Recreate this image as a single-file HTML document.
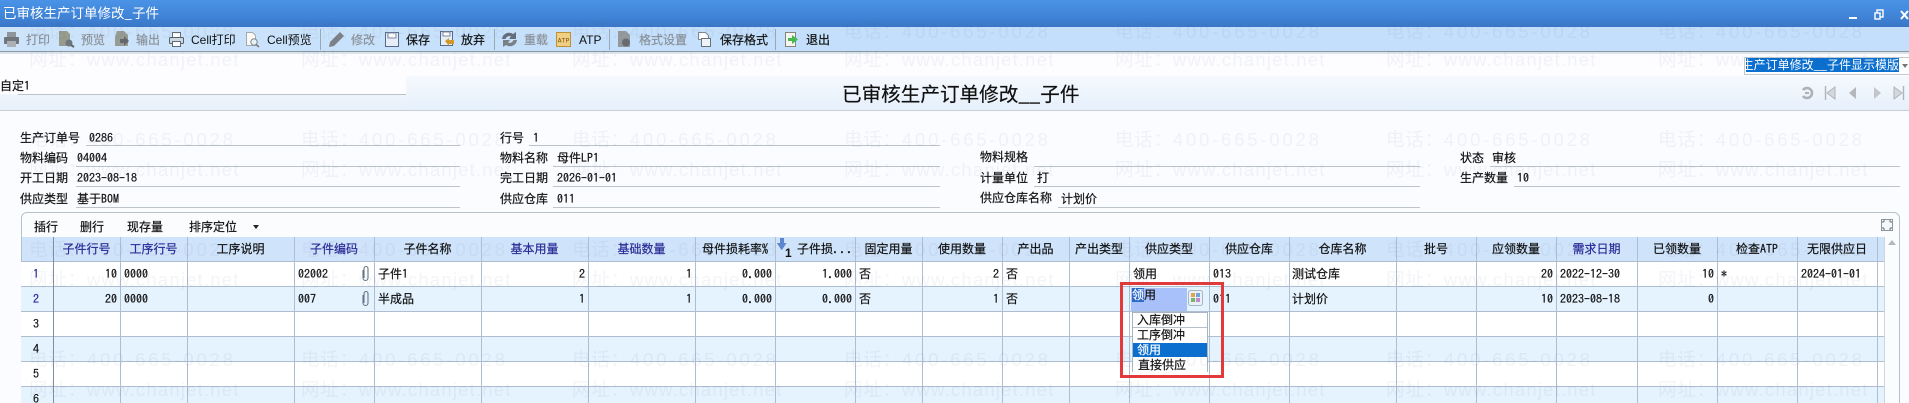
<!DOCTYPE html>
<html lang="zh"><head><meta charset="utf-8"><title>已审核生产订单修改__子件</title>
<style>
html,body{margin:0;padding:0;width:1909px;height:403px;overflow:hidden;background:#fbfcff}
body{position:relative;font:12px "WenQuanYi Zen Hei","Noto Sans CJK SC",sans-serif;color:#111}
div,span,svg{position:absolute}
.t,.o{-webkit-text-stroke:.2px currentColor}
.t{white-space:nowrap;line-height:14px;height:14px}
.n{font-family:"IPAGothic","Liberation Mono",monospace}
.l{font-family:"Liberation Sans","Noto Sans CJK SC",sans-serif}
.g{color:#8b9199}
.ln{height:1px;background:#bcc3c9}
.h{top:242px;text-align:center}
.b{color:#2a2a96}
.v{top:237px;width:1px;height:166px;background:#aebdd0}
.rr{left:21px;width:1863px;height:24px;border-bottom:1px solid #aebdd0}
.o{left:1133px;width:74px;height:14px;padding-left:4px;line-height:14px;white-space:nowrap}
.w{color:rgba(80,90,130,.065);font:18.5px/22px "Liberation Sans","Noto Sans CJK SC",sans-serif;white-space:nowrap;height:22px;z-index:50;letter-spacing:2.8px}
.w.u{letter-spacing:1.2px}
.w em{font-style:normal;letter-spacing:.8px}
</style></head><body>

<div style="left:0;top:0;width:1909px;height:27px;background:linear-gradient(#4a93e6,#4084d8 60%,#3a76c6)"></div>
<span class="t" style="left:3px;top:5px;color:#fff;font-size:13.5px;-webkit-text-stroke:0">已审核生产订单修改_子件</span>
<div style="left:1849px;top:17px;width:8px;height:2px;background:#fff"></div>
<svg style="left:1874px;top:9px" width="10" height="11"><rect x="3" y="1" width="6" height="7" fill="none" stroke="#fff" stroke-width="1.4"/><rect x="1" y="4" width="5" height="6" fill="#4084d8" stroke="#fff" stroke-width="1.4"/></svg>
<svg style="left:1900px;top:10px" width="9" height="10"><path d="M1 1L8 9M8 1L1 9" stroke="#fff" stroke-width="2"/></svg>

<div style="left:0;top:27px;width:1909px;height:24px;background:linear-gradient(90deg,#cde4fb,#c3dffc 40%)"></div>
<div style="left:0;top:51px;width:1909px;height:1px;background:#8f969c"></div>
<div style="left:0;top:52px;width:1909px;height:2px;background:#d9e4ef"></div>
<div style="left:0;top:54px;width:1909px;height:22px;background:#fdfdff"></div>
<div style="left:406px;top:76px;width:1503px;height:34px;background:linear-gradient(#f5f9fe,#e6f0fb)"></div>
<div style="left:0;top:94px;width:406px;height:16px;background:linear-gradient(#f0f5fc,#e7f0fb)"></div>
<div style="left:0;top:76px;width:406px;height:18px;background:#fdfdff"></div>
<div style="left:0;top:110px;width:1909px;height:1px;background:#c8d0d6"></div>
<div class="ln" style="left:18px;top:94px;width:388px"></div>
<span class="t" style="left:0;top:79px">自定<span class="n" style="position:static">1</span></span>
<span class="t" style="left:842px;top:82px;height:22px;line-height:22px;font-size:19.6px;color:#111">已审核生产订单修改__子件</span>

<!-- toolbar icons -->
<svg style="left:3px;top:31px" width="17" height="17"><path d="M4 1h9v6H4z" fill="#8f959b"/><rect x="1" y="6" width="15" height="7" rx="1" fill="#6f757b"/><rect x="4" y="10" width="9" height="6" fill="#aab0b5"/></svg>
<span class="t g" style="left:26px;top:33px">打印</span>
<svg style="left:58px;top:31px" width="17" height="17"><path d="M1 0h8l3 3v12H1z" fill="#979b8e"/><circle cx="11" cy="12" r="3.500" fill="#6f767c"/><path d="M13 14l3 2" stroke="#666" stroke-width="2"/></svg>
<span class="t g" style="left:81px;top:33px">预览</span>
<svg style="left:113px;top:31px" width="17" height="17"><path d="M4 0h7l4 4v11H2V6z" fill="#969c92"/><path d="M7 8h4V5l5 5-5 5v-3H7z" fill="#62686d"/></svg>
<span class="t g" style="left:136px;top:33px">输出</span>
<svg style="left:168px;top:31px" width="17" height="17"><path d="M4.500 1.500h8v5h-8z" fill="#fff" stroke="#5f6d79"/><rect x="1.500" y="6.500" width="14" height="6" rx="1" fill="#cdd7e0" stroke="#55626e"/><rect x="4.500" y="10.500" width="8" height="5" fill="#fff" stroke="#5f6d79"/></svg>
<span class="t l" style="left:191px;top:33px;-webkit-text-stroke:0">Cell打印</span>
<svg style="left:244px;top:31px" width="17" height="17"><path d="M2.500 1.500h6l3 3v10h-9z" fill="#fbfbf6" stroke="#a4aab0"/><circle cx="10" cy="11" r="3.200" fill="#e8f0f4" stroke="#7e878e"/><path d="M12 13.500l3 2.500" stroke="#7b7b7b" stroke-width="1.500"/></svg>
<span class="t l" style="left:267px;top:33px;-webkit-text-stroke:0">Cell预览</span>
<div style="left:320px;top:29px;width:1px;height:21px;background:#9aa8b6"></div>
<svg style="left:328px;top:31px" width="17" height="17"><path d="M12 1l4 4-10 10-5 1 1-5z" fill="#7c8187"/></svg>
<span class="t g" style="left:351px;top:33px">修改</span>
<svg style="left:385px;top:32px" width="14" height="15"><rect x=".5" y=".5" width="13" height="14" fill="#e8eef8" stroke="#586a8a"/><rect x="3" y="1" width="8" height="5" fill="#fff" stroke="#7a89a3"/></svg>
<span class="t" style="left:406px;top:33px">保存</span>
<svg style="left:440px;top:31px" width="15" height="16"><rect x=".5" y=".5" width="12" height="14" fill="#e8eef8" stroke="#586a8a"/><rect x="3" y="1" width="7" height="4" fill="#fff" stroke="#7a89a3"/><path d="M5 10l4-3v2h5v4H9v2z" fill="#d09a28"/></svg>
<span class="t" style="left:461px;top:33px">放弃</span>
<div style="left:494px;top:29px;width:1px;height:21px;background:#9aa8b6"></div>
<svg style="left:501px;top:31px" width="17" height="17"><path d="M1 8a7 7 0 0 1 11-5l3-2v7H8l2-2.500a4 4 0 0 0-5.500 2.500z" fill="#656d78"/><path d="M16 9a7 7 0 0 1-11 5l-3 2V9h7l-2 2.500a4 4 0 0 0 5.500-2.500z" fill="#7a8086"/></svg>
<span class="t g" style="left:524px;top:33px">重载</span>
<svg style="left:556px;top:32px" width="15" height="15"><rect x=".5" y=".5" width="14" height="14" fill="#f0cf84" stroke="#bb9036"/><text x="7.500" y="10.500" font-size="6.500" text-anchor="middle" font-family="Liberation Mono,monospace" fill="#7d5208">ATP</text></svg>
<span class="t l" style="left:579px;top:33px;-webkit-text-stroke:0">ATP</span>
<div style="left:609px;top:29px;width:1px;height:21px;background:#9aa8b6"></div>
<svg style="left:616px;top:31px" width="17" height="17"><path d="M2 0h8l4 4v12H2z" fill="#94989a"/><circle cx="10" cy="11.500" r="4" fill="#666c71"/></svg>
<span class="t g" style="left:639px;top:33px">格式设置</span>
<svg style="left:696px;top:31px" width="16" height="17"><path d="M2.500 1.500h7l3 3v4h-10z" fill="#fff" stroke="#7f868e"/><rect x="5.500" y="7.500" width="9" height="8" fill="#eef3f8" stroke="#65737f"/></svg>
<span class="t" style="left:720px;top:33px">保存格式</span>
<div style="left:775px;top:29px;width:1px;height:21px;background:#9aa8b6"></div>
<svg style="left:783px;top:31px" width="16" height="17"><path d="M2.500 1.500h10v14h-10z" fill="#f6f5ef" stroke="#84847a"/><path d="M5 7h4V4l6 4.500-6 4.500V10H5z" fill="#48b84c"/></svg>
<span class="t" style="left:806px;top:33px">退出</span>

<!-- template dropdown -->
<div style="left:1744px;top:57px;width:165px;height:18px;background:#fff;border:1px solid #c0c8d0;border-right:0;box-sizing:border-box"></div>
<div style="left:1746px;top:58px;width:153px;height:14px;overflow:hidden;background:#0a6fcf;color:#fff;line-height:14px;white-space:nowrap"><span style="right:0;top:0">生产订单修改__子件显示模版</span></div>
<svg style="left:1901px;top:63px" width="8" height="6"><path d="M1 1h6L4 5z" fill="#777"/></svg>

<!-- nav icons -->
<svg style="left:1801px;top:86px" width="13" height="14"><path d="M2 4A5 5 0 1 1 2 10" fill="none" stroke="#aeb2b6" stroke-width="2.600"/><path d="M4 7h4" stroke="#aeb2b6" stroke-width="2.200"/></svg>
<svg style="left:1824px;top:86px" width="12" height="14"><path d="M1.500 0v14" stroke="#b0b4b8" stroke-width="1.400"/><path d="M11 1v12L3 7z" fill="#d3d8dd" stroke="#b0b4b8"/></svg>
<svg style="left:1848px;top:86px" width="9" height="14"><path d="M8 1v12L1 7z" fill="#b4b8bc"/></svg>
<svg style="left:1873px;top:86px" width="9" height="14"><path d="M1 1v12l7-6z" fill="#c2c6ca"/></svg>
<svg style="left:1893px;top:86px" width="12" height="14"><path d="M10.500 0v14" stroke="#b0b4b8" stroke-width="1.400"/><path d="M1 1v12l8-6z" fill="#d3d8dd" stroke="#b0b4b8"/></svg>

<!-- form -->
<span class="t" style="left:20px;top:131px">生产订单号</span><span class="t n" style="left:89px;top:131px">0286</span>
<div class="ln" style="left:86px;top:145px;width:374px"></div>
<span class="t" style="left:500px;top:131px">行号</span><span class="t n" style="left:533px;top:131px">1</span>
<div class="ln" style="left:529px;top:145px;width:411px"></div>

<span class="t" style="left:20px;top:151px">物料编码</span><span class="t n" style="left:77px;top:151px">04004</span>
<div class="ln" style="left:76px;top:166px;width:384px"></div>
<span class="t" style="left:500px;top:151px">物料名称</span><span class="t" style="left:557px;top:151px">母件<span class="n" style="position:static">LP1</span></span>
<div class="ln" style="left:553px;top:166px;width:387px"></div>
<span class="t" style="left:980px;top:150px">物料规格</span>
<div class="ln" style="left:1034px;top:166px;width:386px"></div>
<span class="t" style="left:1460px;top:151px">状态</span><span class="t" style="left:1492px;top:151px">审核</span>
<div class="ln" style="left:1490px;top:166px;width:410px"></div>

<span class="t" style="left:20px;top:171px">开工日期</span><span class="t n" style="left:77px;top:171px">2023-08-18</span>
<div class="ln" style="left:76px;top:186px;width:384px"></div>
<span class="t" style="left:500px;top:171px">完工日期</span><span class="t n" style="left:557px;top:171px">2026-01-01</span>
<div class="ln" style="left:553px;top:186px;width:387px"></div>
<span class="t" style="left:980px;top:171px">计量单位</span><span class="t" style="left:1037px;top:171px">打</span>
<div class="ln" style="left:1034px;top:186px;width:386px"></div>
<span class="t" style="left:1460px;top:171px">生产数量</span><span class="t n" style="left:1517px;top:171px">10</span>
<div class="ln" style="left:1514px;top:186px;width:386px"></div>

<span class="t" style="left:20px;top:192px">供应类型</span><span class="t" style="left:77px;top:192px">基于<span class="n" style="position:static">BOM</span></span>
<div class="ln" style="left:76px;top:207px;width:384px"></div>
<span class="t" style="left:500px;top:192px">供应仓库</span><span class="t n" style="left:557px;top:192px">011</span>
<div class="ln" style="left:553px;top:207px;width:387px"></div>
<span class="t" style="left:980px;top:191px">供应仓库名称</span><span class="t" style="left:1061px;top:192px">计划价</span>
<div class="ln" style="left:1058px;top:207px;width:362px"></div>

<!-- grid panel -->
<div style="left:21px;top:212px;width:1879px;height:200px;box-sizing:border-box;border:1px solid #b5c2c8;border-radius:6px 6px 0 0;background:#fbfcfe"></div>
<span class="t" style="left:34px;top:220px">插行</span>
<span class="t" style="left:80px;top:220px">删行</span>
<span class="t" style="left:127px;top:220px">现存量</span>
<span class="t" style="left:189px;top:220px">排序定位</span>
<svg style="left:253px;top:225px" width="7" height="5"><path d="M0 0h6L3 4z" fill="#222"/></svg>
<svg style="left:1881px;top:219px" width="12" height="12"><rect x=".5" y=".5" width="11" height="11" fill="#f4f7f9" stroke="#8b969e"/><path d="M2 2h2M2 2v2M10 2H8M10 2v2M2 10h2M2 10V8M10 10H8M10 10V8" stroke="#66727c"/></svg>

<div style="left:22px;top:237px;width:1862px;height:24px;background:#cfe4fb;border-bottom:1px solid #aebdd0;box-sizing:content-box"></div>
<div class="rr" style="top:262px;background:#fff"></div>
<div class="rr" style="top:287px;background:#e5f3fe"></div>
<div class="rr" style="top:312px;background:#fff"></div>
<div class="rr" style="top:337px;background:#e5f3fe"></div>
<div class="rr" style="top:362px;background:#fff"></div>
<div class="rr" style="top:387px;background:#e5f3fe"></div>
<div style="left:1884px;top:237px;width:1px;height:166px;background:#cbd5de"></div>
<svg style="left:1888px;top:240px" width="8" height="5"><path d="M4 0l4 5H0z" fill="#b2b8bd"/></svg>

<div class="v" style="left:53px;background:#7f8fa3"></div><div class="v" style="left:120px"></div><div class="v" style="left:187px"></div><div class="v" style="left:294px"></div><div class="v" style="left:374px"></div><div class="v" style="left:481px"></div><div class="v" style="left:588px"></div><div class="v" style="left:695px"></div><div class="v" style="left:775px"></div><div class="v" style="left:855px"></div><div class="v" style="left:922px"></div><div class="v" style="left:1002px"></div><div class="v" style="left:1069px"></div><div class="v" style="left:1129px"></div><div class="v" style="left:1209px"></div><div class="v" style="left:1289px"></div><div class="v" style="left:1396px"></div><div class="v" style="left:1476px"></div><div class="v" style="left:1556px"></div><div class="v" style="left:1637px"></div><div class="v" style="left:1717px"></div><div class="v" style="left:1797px"></div><div class="v" style="left:1877px"></div>

<span class="t h b" style="left:53px;width:67px">子件行号</span>
<span class="t h b" style="left:120px;width:67px">工序行号</span>
<span class="t h" style="left:187px;width:107px">工序说明</span>
<span class="t h b" style="left:294px;width:80px">子件编码</span>
<span class="t h" style="left:374px;width:107px">子件名称</span>
<span class="t h b" style="left:481px;width:107px">基本用量</span>
<span class="t h b" style="left:588px;width:107px">基础数量</span>
<span class="t h" style="left:695px;width:80px">母件损耗率<span class="n" style="position:static">%</span></span>
<svg style="left:776px;top:238px" width="17" height="20"><path d="M6 0v5h4L5.500 12 1 5h3V0z" fill="#4470bd"/><path d="M4 0h4v5h2.500L6 12 1.500 5H4z" fill="#5c86d0"/><text x="9" y="19" font-size="12" font-weight="700" font-family="Liberation Sans,sans-serif" fill="#111">1</text></svg>
<span class="t" style="left:797px;top:242px">子件损<span class="n" style="position:static;letter-spacing:1px">...</span></span>
<span class="t h" style="left:855px;width:67px">固定用量</span>
<span class="t h" style="left:922px;width:80px">使用数量</span>
<span class="t h" style="left:1002px;width:67px">产出品</span>
<span class="t h" style="left:1069px;width:60px">产出类型</span>
<span class="t h" style="left:1129px;width:80px">供应类型</span>
<span class="t h" style="left:1209px;width:80px">供应仓库</span>
<span class="t h" style="left:1289px;width:107px">仓库名称</span>
<span class="t h" style="left:1396px;width:80px">批号</span>
<span class="t h" style="left:1476px;width:80px">应领数量</span>
<span class="t h b" style="left:1556px;width:81px">需求日期</span>
<span class="t h" style="left:1637px;width:80px">已领数量</span>
<span class="t h" style="left:1717px;width:80px">检查<span class="n" style="position:static">ATP</span></span>
<span class="t h" style="left:1797px;width:80px">无限供应日</span>

<span class="t n b" style="left:33px;top:267px">1</span>
<span class="t n b" style="left:33px;top:292px">2</span>
<span class="t n" style="left:33px;top:317px">3</span>
<span class="t n" style="left:33px;top:342px">4</span>
<span class="t n" style="left:33px;top:367px">5</span>
<span class="t n" style="left:33px;top:392px">6</span>

<span class="t n" style="right:1792px;top:267px">10</span>
<span class="t n" style="left:124px;top:267px">0000</span>
<span class="t n" style="left:298px;top:267px">02002</span>
<svg style="left:361px;top:265px" width="9" height="18"><path d="M2 5v8a2.500 2.500 0 0 0 5 0V3.500a2 2 0 0 0-4 0V13" fill="none" stroke="#667585" stroke-width="1.100"/></svg>
<span class="t" style="left:378px;top:267px">子件<span class="n" style="position:static">1</span></span>
<span class="t n" style="right:1324px;top:267px">2</span>
<span class="t n" style="right:1217px;top:267px">1</span>
<span class="t n" style="right:1137px;top:267px">0.000</span>
<span class="t n" style="right:1057px;top:267px">1.000</span>
<span class="t" style="left:859px;top:267px">否</span>
<span class="t n" style="right:910px;top:267px">2</span>
<span class="t" style="left:1006px;top:267px">否</span>
<span class="t" style="left:1133px;top:267px">领用</span>
<span class="t n" style="left:1213px;top:267px">013</span>
<span class="t" style="left:1292px;top:267px">测试仓库</span>
<span class="t n" style="right:356px;top:267px">20</span>
<span class="t n" style="left:1560px;top:267px">2022-12-30</span>
<span class="t n" style="right:195px;top:267px">10</span>
<span class="t n" style="left:1721px;top:267px">*</span>
<span class="t n" style="left:1801px;top:267px">2024-01-01</span>

<span class="t n" style="right:1792px;top:292px">20</span>
<span class="t n" style="left:124px;top:292px">0000</span>
<span class="t n" style="left:298px;top:292px">007</span>
<svg style="left:361px;top:290px" width="9" height="18"><path d="M2 5v8a2.500 2.500 0 0 0 5 0V3.500a2 2 0 0 0-4 0V13" fill="none" stroke="#667585" stroke-width="1.100"/></svg>
<span class="t" style="left:378px;top:292px">半成品</span>
<span class="t n" style="right:1324px;top:292px">1</span>
<span class="t n" style="right:1217px;top:292px">1</span>
<span class="t n" style="right:1137px;top:292px">0.000</span>
<span class="t n" style="right:1057px;top:292px">0.000</span>
<span class="t" style="left:859px;top:292px">否</span>
<span class="t n" style="right:910px;top:292px">1</span>
<span class="t" style="left:1006px;top:292px">否</span>
<span class="t n" style="left:1213px;top:292px">011</span>
<span class="t" style="left:1292px;top:292px">计划价</span>
<span class="t n" style="right:356px;top:292px">10</span>
<span class="t n" style="left:1560px;top:292px">2023-08-18</span>
<span class="t n" style="right:195px;top:292px">0</span>

<!-- editor -->
<div style="left:1131px;top:288px;width:56px;height:23px;background:#a9c1fb"></div>
<div style="left:1132px;top:288px;width:12px;height:14px;background:#2a6ac8"></div>
<span class="t" style="left:1132px;top:288px;color:#111"><span style="position:static;color:#fff">领</span>用</span>
<svg style="left:1188px;top:290px" width="15" height="16"><rect x=".5" y=".5" width="14" height="15" rx="2" fill="#e8f0f8" stroke="#a7b6c6"/><rect x="3" y="3" width="4" height="4" fill="#e7a14a"/><rect x="8" y="3" width="4" height="4" fill="#6da4d9"/><rect x="3" y="8" width="4" height="4" fill="#77b56c"/><rect x="8" y="8" width="4" height="4" fill="#c389c9"/></svg>

<div style="left:1132px;top:312px;width:76px;height:60px;box-sizing:border-box;border:1px solid #a9b5c5;border-bottom:0;background:#fff"></div>
<div style="left:1133px;top:327px;width:74px;height:1px;background:#b6c1ce"></div>
<div style="left:1133px;top:343px;width:74px;height:14px;background:#0a6fcf"></div>
<span class="o" style="top:313px">入库倒冲</span>
<span class="o" style="top:328px">工序倒冲</span>
<span class="o" style="top:343px;color:#fff">领用</span>
<span class="o" style="top:358px;padding-left:5px">直接供应</span>

<div style="left:1120px;top:282px;width:104px;height:96px;box-sizing:border-box;border:3px solid #e23a3a"></div>

<!-- watermark -->
<div class="w" style="left:29px;top:21px"><em>电话：</em>400-665-0028</div><div class="w" style="left:301px;top:21px"><em>电话：</em>400-665-0028</div><div class="w" style="left:572px;top:21px"><em>电话：</em>400-665-0028</div><div class="w" style="left:844px;top:21px"><em>电话：</em>400-665-0028</div><div class="w" style="left:1115px;top:21px"><em>电话：</em>400-665-0028</div><div class="w" style="left:1386px;top:21px"><em>电话：</em>400-665-0028</div><div class="w" style="left:1658px;top:21px"><em>电话：</em>400-665-0028</div>
<div class="w u" style="left:29px;top:49px"><em>网址：</em>www.chanjet.net</div><div class="w u" style="left:301px;top:49px"><em>网址：</em>www.chanjet.net</div><div class="w u" style="left:572px;top:49px"><em>网址：</em>www.chanjet.net</div><div class="w u" style="left:844px;top:49px"><em>网址：</em>www.chanjet.net</div><div class="w u" style="left:1115px;top:49px"><em>网址：</em>www.chanjet.net</div><div class="w u" style="left:1386px;top:49px"><em>网址：</em>www.chanjet.net</div><div class="w u" style="left:1658px;top:49px"><em>网址：</em>www.chanjet.net</div>
<div class="w" style="left:29px;top:129px"><em>电话：</em>400-665-0028</div><div class="w" style="left:301px;top:129px"><em>电话：</em>400-665-0028</div><div class="w" style="left:572px;top:129px"><em>电话：</em>400-665-0028</div><div class="w" style="left:844px;top:129px"><em>电话：</em>400-665-0028</div><div class="w" style="left:1115px;top:129px"><em>电话：</em>400-665-0028</div><div class="w" style="left:1386px;top:129px"><em>电话：</em>400-665-0028</div><div class="w" style="left:1658px;top:129px"><em>电话：</em>400-665-0028</div>
<div class="w u" style="left:29px;top:159px"><em>网址：</em>www.chanjet.net</div><div class="w u" style="left:301px;top:159px"><em>网址：</em>www.chanjet.net</div><div class="w u" style="left:572px;top:159px"><em>网址：</em>www.chanjet.net</div><div class="w u" style="left:844px;top:159px"><em>网址：</em>www.chanjet.net</div><div class="w u" style="left:1115px;top:159px"><em>网址：</em>www.chanjet.net</div><div class="w u" style="left:1386px;top:159px"><em>网址：</em>www.chanjet.net</div><div class="w u" style="left:1658px;top:159px"><em>网址：</em>www.chanjet.net</div>
<div class="w" style="left:29px;top:239px"><em>电话：</em>400-665-0028</div><div class="w" style="left:301px;top:239px"><em>电话：</em>400-665-0028</div><div class="w" style="left:572px;top:239px"><em>电话：</em>400-665-0028</div><div class="w" style="left:844px;top:239px"><em>电话：</em>400-665-0028</div><div class="w" style="left:1115px;top:239px"><em>电话：</em>400-665-0028</div><div class="w" style="left:1386px;top:239px"><em>电话：</em>400-665-0028</div><div class="w" style="left:1658px;top:239px"><em>电话：</em>400-665-0028</div>
<div class="w u" style="left:29px;top:269px"><em>网址：</em>www.chanjet.net</div><div class="w u" style="left:301px;top:269px"><em>网址：</em>www.chanjet.net</div><div class="w u" style="left:572px;top:269px"><em>网址：</em>www.chanjet.net</div><div class="w u" style="left:844px;top:269px"><em>网址：</em>www.chanjet.net</div><div class="w u" style="left:1115px;top:269px"><em>网址：</em>www.chanjet.net</div><div class="w u" style="left:1386px;top:269px"><em>网址：</em>www.chanjet.net</div><div class="w u" style="left:1658px;top:269px"><em>网址：</em>www.chanjet.net</div>
<div class="w" style="left:29px;top:349px"><em>电话：</em>400-665-0028</div><div class="w" style="left:301px;top:349px"><em>电话：</em>400-665-0028</div><div class="w" style="left:572px;top:349px"><em>电话：</em>400-665-0028</div><div class="w" style="left:844px;top:349px"><em>电话：</em>400-665-0028</div><div class="w" style="left:1115px;top:349px"><em>电话：</em>400-665-0028</div><div class="w" style="left:1386px;top:349px"><em>电话：</em>400-665-0028</div><div class="w" style="left:1658px;top:349px"><em>电话：</em>400-665-0028</div>
<div class="w u" style="left:29px;top:379px"><em>网址：</em>www.chanjet.net</div><div class="w u" style="left:301px;top:379px"><em>网址：</em>www.chanjet.net</div><div class="w u" style="left:572px;top:379px"><em>网址：</em>www.chanjet.net</div><div class="w u" style="left:844px;top:379px"><em>网址：</em>www.chanjet.net</div><div class="w u" style="left:1115px;top:379px"><em>网址：</em>www.chanjet.net</div><div class="w u" style="left:1386px;top:379px"><em>网址：</em>www.chanjet.net</div><div class="w u" style="left:1658px;top:379px"><em>网址：</em>www.chanjet.net</div>
</body></html>
